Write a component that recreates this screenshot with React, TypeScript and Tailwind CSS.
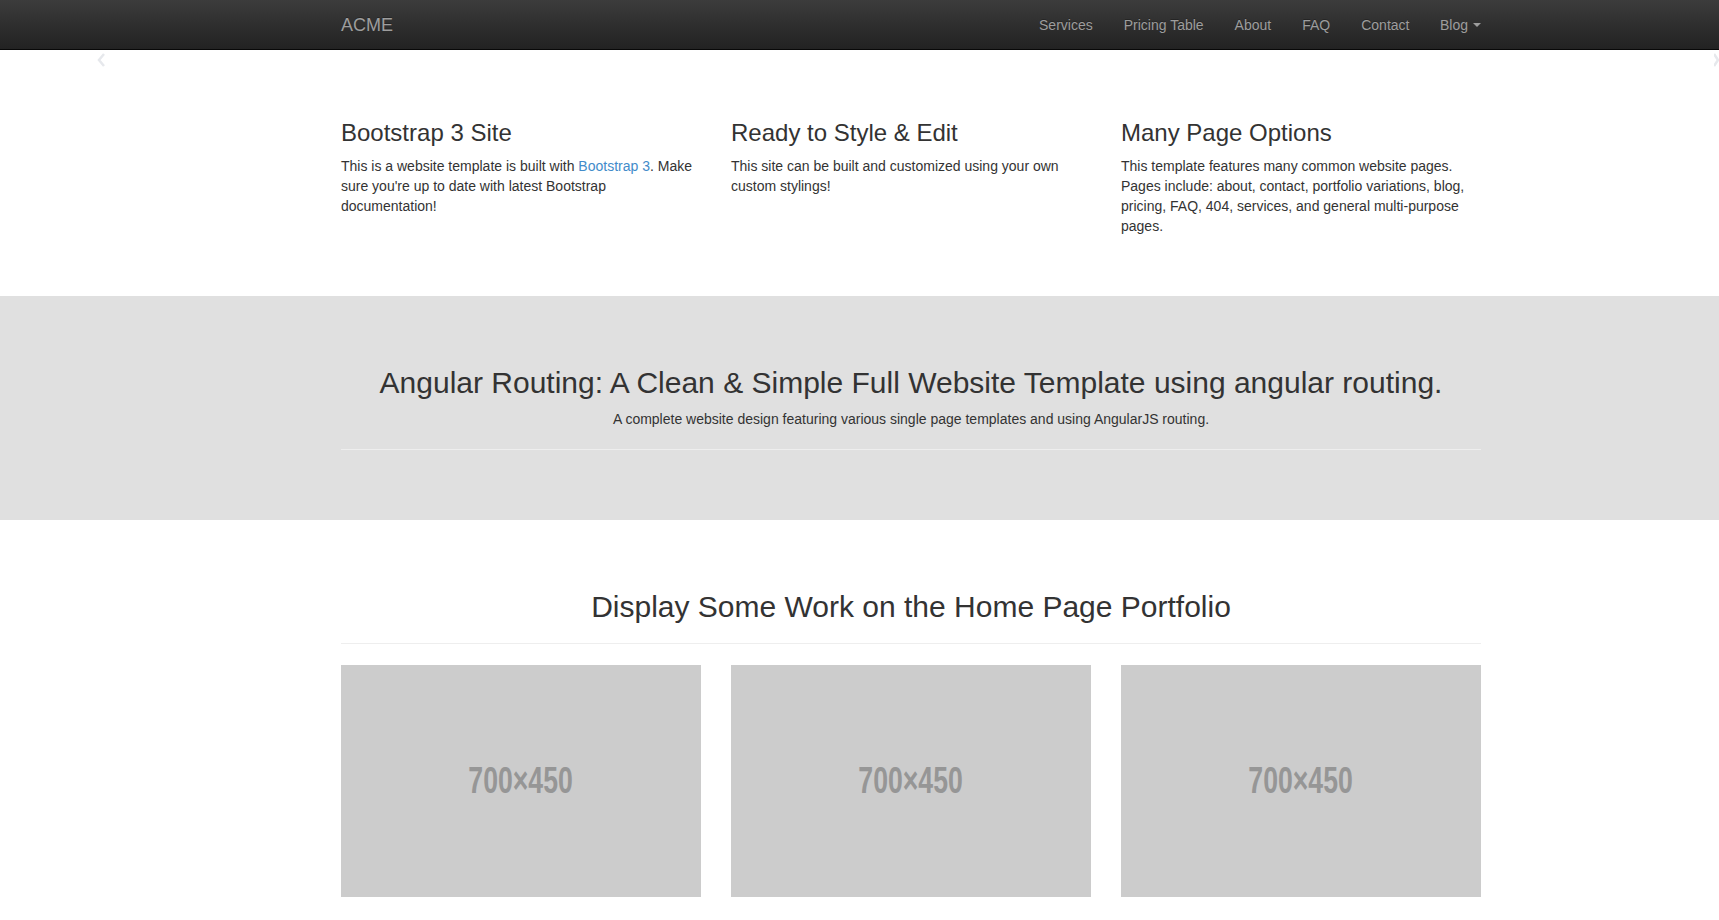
import React from 'react';

const features = [
  {
    title: 'Bootstrap 3 Site',
    body: (
      <>
        This is a website template is built with{' '}
        <a href="#" className="text-[#428bca]">Bootstrap 3</a>. Make sure you're up to date with latest Bootstrap
        documentation!
      </>
    ),
  },
  {
    title: 'Ready to Style & Edit',
    body: <>This site can be built and customized using your own custom stylings!</>,
  },
  {
    title: 'Many Page Options',
    body: (
      <>
        This template features many common website pages. Pages include: about, contact, portfolio variations, blog,
        pricing, FAQ, 404, services, and general multi-purpose pages.
      </>
    ),
  },
];

const navLinks = ['Services', 'Pricing Table', 'About', 'FAQ', 'Contact'];

const Placeholder: React.FC = () => (
  <div className="h-[232px] bg-[#cccccc] flex items-center justify-center">
    <span className="inline-block scale-x-[0.72] font-bold text-[37px] text-[#969696]" style={{ fontFamily: '"Liberation Sans Narrow", "Liberation Sans", sans-serif' }}>
      700×450
    </span>
  </div>
);

export default function App() {
  return (
    <div className="min-h-[920px] bg-white text-[#333333] text-[14px] leading-[20px]" style={{ fontFamily: '"Liberation Sans", Arial, sans-serif' }}>
      {/* Navbar */}
      <nav className="h-[50px] bg-linear-to-b from-[#3c3c3c] to-[#222222] border-b border-[#080808]">
        <div className="ml-[326px] w-[1170px] px-[15px] flex items-center justify-between h-full">
          <a href="#" className="text-[18px] leading-[20px] text-[#9d9d9d] [text-shadow:0_-1px_0_rgba(0,0,0,0.25)]">
            ACME
          </a>
          <ul className="flex -mr-[15px]">
            {navLinks.map((l) => (
              <li key={l}>
                <a href="#" className="block px-[15.5px] py-[15px] text-[#9d9d9d] [text-shadow:0_-1px_0_rgba(0,0,0,0.25)]">
                  {l}
                </a>
              </li>
            ))}
            <li>
              <a href="#" className="flex items-center px-[15px] py-[15px] text-[#9d9d9d]">
                Blog
                <span className="ml-[5px] w-0 h-0 border-x-[4px] border-x-transparent border-t-[4px] border-t-[#9d9d9d]" />
              </a>
            </li>
          </ul>
        </div>
      </nav>

      {/* Carousel controls (faint) */}
      <div className="relative h-0">
        <svg className="absolute left-[97px] top-[3px]" width="9" height="14" viewBox="0 0 9 14">
          <path d="M7 1 L2 7 L7 13" fill="none" stroke="#e6e8ec" strokeWidth="2.5" />
        </svg>
        <svg className="absolute right-0 top-[3px]" width="5" height="14" viewBox="0 0 5 14">
          <path d="M0 1 L4 7 L0 13" fill="none" stroke="#e6e8ec" strokeWidth="2.5" />
        </svg>
      </div>

      {/* Features */}
      <section className="ml-[326px] w-[1170px] pt-[70px] pb-[50px]">
        <div className="grid grid-cols-3">
          {features.map((f) => (
            <div key={f.title} className="px-[15px]">
              <h3 className="text-[24px] leading-[26px] mb-[10px]">{f.title}</h3>
              <p className="mb-[10px]">{f.body}</p>
            </div>
          ))}
        </div>
      </section>

      {/* Banner */}
      <section className="bg-[#e0e0e0] pt-[70px] pb-[70px]">
        <div className="ml-[326px] w-[1170px] px-[15px] text-center">
          <h2 className="text-[30px] leading-[33px] mb-[10px]">
            Angular Routing: A Clean &amp; Simple Full Website Template using angular routing.
          </h2>
          <p>A complete website design featuring various single page templates and using AngularJS routing.</p>
          <hr className="mt-[20px] border-t border-[#eeeeee]" />
        </div>
      </section>

      {/* Portfolio */}
      <section className="ml-[326px] w-[1170px] pt-[70px]">
        <div className="px-[15px]">
          <h2 className="text-[30px] leading-[33px] text-center">Display Some Work on the Home Page Portfolio</h2>
          <hr className="mt-[20px] mb-[21px] border-t border-[#eeeeee]" />
        </div>
        <div className="grid grid-cols-3">
          {[0, 1, 2].map((i) => (
            <div key={i} className="px-[15px]">
              <Placeholder />
            </div>
          ))}
        </div>
      </section>
    </div>
  );
}
